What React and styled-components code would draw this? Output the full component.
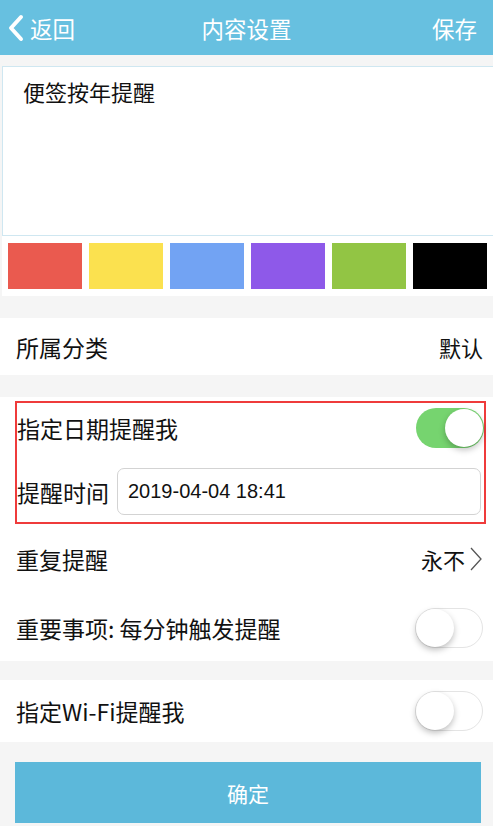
import React from 'react';
import styled, {createGlobalStyle} from 'styled-components';

const GlobalStyle = createGlobalStyle`
  *, *::before, *::after {
    box-sizing: border-box;
  }
  html, body {
    margin: 0;
    padding: 0;
    background: #f5f5f5;
    font-family: "Noto Sans CJK SC", "Noto Sans", sans-serif;
  }
`;

const Page = styled.div`
  width: 493px;
  height: 826px;
  overflow: hidden;
  background: #f5f5f5;
  color: #111;
`;

const Header = styled.div`
  height: 55px;
  background: #67c0e0;
  display: flex;
  align-items: center;
  justify-content: space-between;
  padding: 0 16px 0 7px;
  color: #fff;
  font-size: 22.5px;
  position: relative;
`;

const Back = styled.div`
  display: flex;
  align-items: center;
  gap: 5px;
`;

const Title = styled.div`
  position: absolute;
  left: 0;
  right: 0;
  text-align: center;
  pointer-events: none;
`;

const NoteBox = styled.div`
  margin: 11px -4px 0 2px;
  height: 170px;
  background: #fff;
  border: 1px solid #cfe7f1;
  padding: 9px 20px;
  font-size: 22px;
  line-height: 30px;
`;

const Swatches = styled.div`
  margin-left: 2px;
  height: 60px;
  background: #fff;
  display: grid;
  grid-template-columns: repeat(6, 74px);
  column-gap: 7px;
  padding: 7px 0 0 6px;
`;

const Swatch = styled.div`
  height: 46px;
  background: ${p => p.color};
`;

const Section = styled.div`
  background: #fff;
  margin-top: ${p => p.gap}px;
  padding-top: ${p => p.top || 0}px;
`;

const Row = styled.div`
  height: ${p => p.h}px;
  display: flex;
  align-items: center;
  justify-content: space-between;
  padding: 0 10px 0 16px;
  font-size: 23px;
`;

const RightText = styled.div`
  display: flex;
  align-items: center;
  gap: 4px;
  font-size: 22px;
`;

const RedBox = styled.div`
  margin: 0 7px 0 15px;
  border: 2px solid #ef3b3b;
  height: 123px;
  padding: 4px 0 0 0;
`;

const BoxRow = styled.div`
  display: flex;
  align-items: center;
  justify-content: space-between;
  height: ${p => p.h}px;
  padding: ${p => p.pad || '0'};
  font-size: 23px;
  gap: 8px;
`;

const TimeInput = styled.div`
  flex: 1;
  height: 47px;
  border: 1px solid #d3d3d3;
  border-radius: 7px;
  display: flex;
  align-items: center;
  padding-left: 10px;
  font-family: "Liberation Sans", Arial, sans-serif;
  font-size: 20px;
  margin-right: 3px;
`;

const Toggle = styled.div`
  width: 68px;
  height: 40px;
  border-radius: 20px;
  background: ${p => (p.on ? '#76d46f' : '#fff')};
  border: ${p => (p.on ? 'none' : '1.5px solid #e4e4e4')};
  position: relative;
  flex-shrink: 0;
`;

const Knob = styled.div`
  position: absolute;
  top: ${p => (p.on ? 1 : 0)}px;
  ${p => (p.on ? 'right: 1px;' : 'left: 0;')}
  width: 38px;
  height: 38px;
  border-radius: 50%;
  background: #fff;
  box-shadow: 0 3px 6px rgba(0, 0, 0, 0.25);
`;

const Footer = styled.div`
  padding: 20px 12px 0 15px;
`;

const Button = styled.div`
  height: 61px;
  background: #5cb8da;
  color: #fff;
  font-size: 21px;
  display: flex;
  align-items: center;
  justify-content: center;
`;

const colors = ['#ea5a4f', '#fbe14f', '#72a3f3', '#8e59e9', '#92c544', '#000'];

const Switch = ({on}) => (
    <Toggle on={on ? 1 : 0}>
        <Knob on={on ? 1 : 0}/>
    </Toggle>
);

const App = () => (
    <Page>
        <GlobalStyle/>
        <Header>
            <Back>
                <svg width="18" height="28" viewBox="0 0 18 28">
                    <path d="M14 3 L4 14 L14 25" fill="none" stroke="#fff" strokeWidth="4"
                          strokeLinecap="round" strokeLinejoin="round"/>
                </svg>
                <span>返回</span>
            </Back>
            <Title>内容设置</Title>
            <span>保存</span>
        </Header>
        <NoteBox>便签按年提醒</NoteBox>
        <Swatches>
            {colors.map(c => <Swatch key={c} color={c}/>)}
        </Swatches>
        <Section gap={22}>
            <Row h={57}>
                <span>所属分类</span>
                <RightText>默认</RightText>
            </Row>
        </Section>
        <Section gap={22} top={4}>
            <RedBox>
                <BoxRow h={42}>
                    <span>指定日期提醒我</span>
                    <Switch on/>
                </BoxRow>
                <BoxRow h={73} pad="19px 0 7px 0">
                    <span>提醒时间</span>
                    <TimeInput>2019-04-04 18:41</TimeInput>
                </BoxRow>
            </RedBox>
            <Row h={70}>
                <span>重复提醒</span>
                <RightText>
                    永不
                    <svg width="14" height="26" viewBox="0 0 14 26">
                        <path d="M2 2 L12 13 L2 24" fill="none" stroke="#555" strokeWidth="1.3"/>
                    </svg>
                </RightText>
            </Row>
            <Row h={67}>
                <span>重要事项: 每分钟触发提醒</span>
                <Switch/>
            </Row>
        </Section>
        <Section gap={19}>
            <Row h={62}>
                <span>指定Wi-Fi提醒我</span>
                <Switch/>
            </Row>
        </Section>
        <Footer>
            <Button>确定</Button>
        </Footer>
    </Page>
);

export default App;
